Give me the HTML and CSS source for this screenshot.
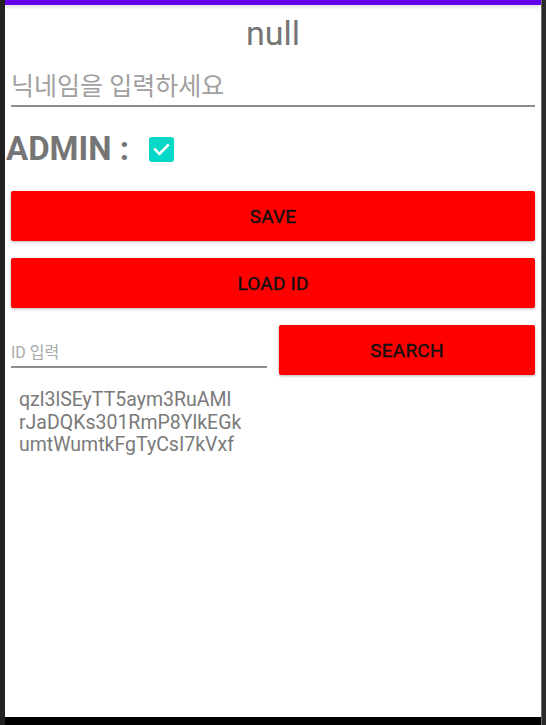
FILE: index.html
```html
<!DOCTYPE html>
<html lang="ko">
<head>
<meta charset="utf-8">
<title>null</title>
<link rel="stylesheet" href="styles.css">
</head>
<body>
<div class="device">
  <div class="strip-left"></div>
  <div class="main">
    <div class="screen">
      <div class="appbar"></div>
      <div class="title">null</div>
      <div class="field nick"><span class="hint">닉네임을 입력하세요</span></div>
      <div class="admin-row">
        <span class="admin-label">ADMIN :</span>
        <span class="checkbox">
          <svg width="25" height="25" viewBox="0 0 25 25"><path d="M6.2 12.6 L10.4 16.8 L18.8 8.4" fill="none" stroke="#fff" stroke-width="2.6" stroke-linecap="square"/></svg>
        </span>
      </div>
      <div class="btn first">SAVE</div>
      <div class="btn">LOAD ID</div>
      <div class="search-row">
        <div class="field idfield"><span class="hint small">ID 입력</span></div>
        <div class="btn search">SEARCH</div>
      </div>
      <div class="ids">qzl3lSEyTT5aym3RuAMl<br>rJaDQKs301RmP8YlkEGk<br>umtWumtkFgTyCsI7kVxf</div>
    </div>
    <div class="bottom-black"></div>
  </div>
  <div class="strip-right"></div>
</div>
</body>
</html>
```
FILE: styles.css
```css
html, body {
  margin: 0;
  padding: 0;
  background: #222222;
  width: 546px;
  height: 725px;
  overflow: hidden;
  font-family: Roboto, "Noto Sans CJK KR", sans-serif;
}
.device {
  display: flex;
  height: 725px;
}
.strip-left {
  width: 5px;
  background: #222222;
}
.main {
  width: 536px;
  display: flex;
  flex-direction: column;
}
.strip-right {
  width: 5px;
  background: #2a2a2a;
  border-left: 1px solid #6e6e6e;
  box-sizing: border-box;
}
.screen {
  height: 717px;
  background: #ffffff;
  display: flex;
  flex-direction: column;
}
.bottom-black {
  height: 8px;
  background: #000000;
}
.appbar {
  height: 5px;
  background: #6200ee;
  box-shadow: 0 2px 4px rgba(0, 0, 0, 0.14);
}
.title {
  margin-top: 8px;
  font-size: 34px;
  line-height: 40px;
  color: #757575;
  text-align: center;
}
.field {
  border-bottom: 2px solid #8c8c8c;
  display: flex;
  align-items: flex-end;
}
.nick {
  margin: 12px 6px 0 6px;
  height: 37px;
  padding-bottom: 3px;
}
.hint {
  font-family: Roboto, "Noto Sans CJK KR", sans-serif;
  font-size: 25px;
  line-height: 30px;
  color: #a0a0a0;
}
.admin-row {
  display: flex;
  align-items: center;
  margin: 20px 0 0 1px;
  height: 44px;
}
.admin-label {
  font-weight: bold;
  font-size: 33px;
  color: #757575;
  line-height: 40px;
}
.checkbox {
  margin-left: 20px;
  width: 25px;
  height: 25px;
  border-radius: 3px;
  background: #05d8c6;
  display: flex;
}
.btn {
  margin: 17px 6px 0 6px;
  height: 50px;
  background: #ff0000;
  border-radius: 2px;
  box-shadow: 0 1px 3px rgba(0, 0, 0, 0.3);
  color: #111111;
  font-weight: 400;
  -webkit-text-stroke: 0.4px #111111;
  font-size: 19px;
  display: flex;
  align-items: center;
  justify-content: center;
  letter-spacing: 0.2px;
}
.btn.first {
  margin-top: 20px;
}
.search-row {
  display: flex;
  margin: 17px 6px 0 6px;
  gap: 12px;
  align-items: flex-start;
}
.idfield {
  flex: 1;
  height: 38px;
  padding-bottom: 3px;
}
.hint.small {
  font-size: 16px;
  line-height: 20px;
  color: #a8a8a8;
}
.btn.search {
  flex: 1;
  margin: 0;
}
.ids {
  margin: 14px 0 0 14px;
  font-size: 19.5px;
  line-height: 22.5px;
  color: #7a7a7a;
}
```
